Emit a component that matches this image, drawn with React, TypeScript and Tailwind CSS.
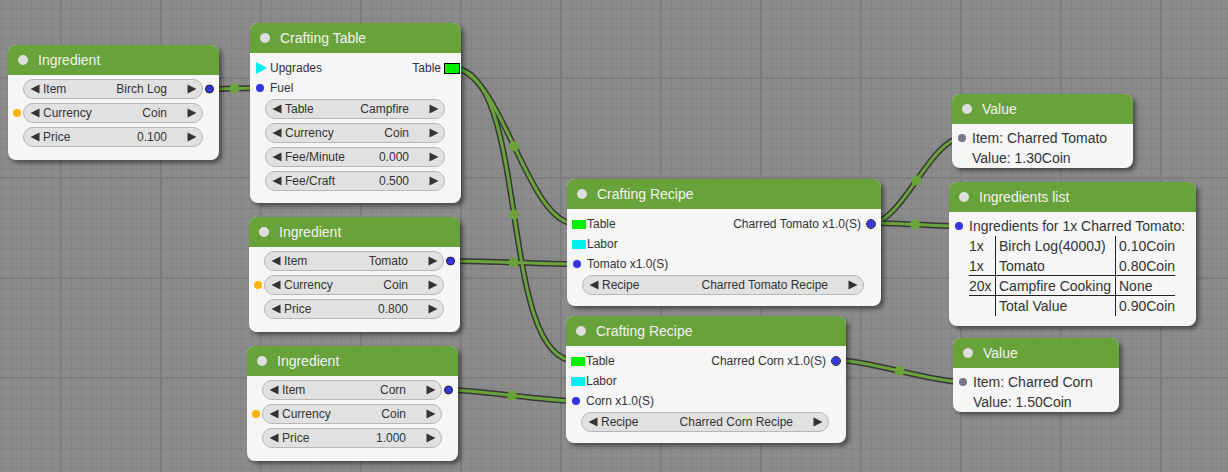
import React from "react";

const FONT = "font-['Liberation_Sans',Arial,sans-serif]";

function TriL() {
  return (
    <svg width="10" height="10" viewBox="0 0 10 10" className="shrink-0">
      <polygon points="0.5,5 9.5,0.5 9.5,9.5" fill="#333" />
    </svg>
  );
}
function TriR() {
  return (
    <svg width="10" height="10" viewBox="0 0 10 10" className="shrink-0">
      <polygon points="0.5,0.5 9.5,5 0.5,9.5" fill="#333" />
    </svg>
  );
}

function Widget({ label, value, inDot, outDot }: { label: string; value: string; inDot?: boolean; outDot?: boolean }) {
  return (
    <div className="relative">
      {inDot && <div className="absolute left-[-10px] top-1/2 -translate-y-1/2 w-[8px] h-[8px] rounded-full bg-[#ffb300]" />}
      {outDot && (
        <div className="absolute right-[-10.5px] top-1/2 -translate-y-1/2 w-[9px] h-[9px] rounded-full bg-[#3434e0] border border-[#222]" />
      )}
      <div className="h-5 rounded-full border border-[#b7b7b7] bg-[#e1e1e1] flex items-center pl-[6px] pr-[5px] text-[12px] text-[#333] leading-none">
        <TriL />
        <span className="ml-[3px] whitespace-nowrap">{label}</span>
        <span className="ml-auto mr-[20px] whitespace-nowrap">{value}</span>
        <TriR />
      </div>
    </div>
  );
}

function Node({
  x,
  y,
  w,
  title,
  children,
}: {
  x: number;
  y: number;
  w: number;
  title: string;
  children: React.ReactNode;
}) {
  return (
    <div
      className="absolute rounded-[8px] bg-[#f6f6f6] shadow-[3px_3px_4px_rgba(0,0,0,0.45)]"
      style={{ left: x, top: y, width: w }}
    >
      <div className="h-[30px] rounded-t-[8px] bg-[#68a23b] flex items-center pl-[10px]">
        <div className="w-[10px] h-[10px] rounded-full bg-[#dedede]" />
        <span className="ml-[10px] text-[14px] text-[#f2f2f2] whitespace-nowrap">{title}</span>
      </div>
      {children}
    </div>
  );
}

function Ingredient({ x, y, item, price }: { x: number; y: number; item: string; price: string }) {
  return (
    <Node x={x} y={y} w={211} title="Ingredient">
      <div className="flex flex-col gap-1 pt-1 pb-[13px] pl-[15px] pr-[16px]">
        <Widget label="Item" value={item} outDot />
        <Widget label="Currency" value="Coin" inDot />
        <Widget label="Price" value={price} />
      </div>
    </Node>
  );
}

function GreenRect({ border }: { border?: boolean }) {
  return <div className={`w-[14px] h-[9px] bg-[#00f000] ${border ? "outline outline-1 outline-black" : ""}`} />;
}
function CyanRect() {
  return <div className="w-[14px] h-[9px] bg-[#00f0f0]" />;
}
function BlueDot({ ring }: { ring?: boolean }) {
  return (
    <div
      className={`w-[8px] h-[8px] rounded-full bg-[#3434e0] ${ring ? "outline outline-1 outline-[#222]" : ""}`}
    />
  );
}

function SlotRow({
  left,
  label,
  rightLabel,
  right,
}: {
  left: React.ReactNode;
  label?: string;
  rightLabel?: string;
  right?: React.ReactNode;
}) {
  return (
    <div className="h-5 flex items-center text-[12px] text-[#333]">
      <div className="w-5 flex items-center justify-center shrink-0">{left}</div>
      <span className="whitespace-nowrap">{label}</span>
      {rightLabel && <span className="ml-auto whitespace-nowrap">{rightLabel}</span>}
      {right && <div className="w-5 flex items-center justify-center shrink-0">{right}</div>}
    </div>
  );
}

function Recipe({
  x,
  y,
  w,
  out,
  input,
  recipe,
}: {
  x: number;
  y: number;
  w: number;
  out: string;
  input: string;
  recipe: string;
}) {
  return (
    <Node x={x} y={y} w={w} title="Crafting Recipe">
      <div className="pt-[5px] pb-[11px]">
        <SlotRow
          left={<div className="w-full pl-[5px]"><GreenRect /></div>}
          label="Table"
          rightLabel={out}
          right={<BlueDot ring />}
        />
        <SlotRow left={<div className="w-full pl-[5px]"><CyanRect /></div>} label="Labor" />
        <SlotRow left={<BlueDot />} label={input} />
        <div className="mt-px pl-[15px] pr-[17px]">
          <Widget label="Recipe" value={recipe} />
        </div>
      </div>
    </Node>
  );
}

function ValueNode({ x, y, w, item, value }: { x: number; y: number; w: number; item: string; value: string }) {
  return (
    <Node x={x} y={y} w={w} title="Value">
      <div className="pt-1 text-[14px] text-[#333]">
        <div className="h-5 flex items-center">
          <div className="w-5 flex justify-center">
            <div className="w-[8px] h-[8px] rounded-full bg-[#77778a]" />
          </div>
          <span className="whitespace-nowrap">{item}</span>
        </div>
        <div className="h-5 flex items-center pl-5 whitespace-nowrap">{value}</div>
      </div>
    </Node>
  );
}

const links: [number, number, number, number][] = [
  [209, 89, 260, 88],
  [452, 68, 576, 224],
  [452, 68, 576, 361],
  [450, 261, 577, 264],
  [448, 390, 576, 401],
  [871, 223, 962, 138],
  [871, 223, 959, 226],
  [836, 360, 963, 382],
];

function linkPath(x1: number, y1: number, x2: number, y2: number) {
  const d = Math.hypot(x2 - x1, y2 - y1) * 0.25;
  return `M${x1} ${y1} C${x1 + d} ${y1} ${x2 - d} ${y2} ${x2} ${y2}`;
}
function mid(x1: number, y1: number, x2: number, y2: number) {
  const d = Math.hypot(x2 - x1, y2 - y1) * 0.25;
  const cx1 = x1 + d,
    cx2 = x2 - d;
  return [(x1 + 3 * cx1 + 3 * cx2 + x2) / 8, (y1 + 3 * y1 + 3 * y2 + y2) / 8];
}

function Canvas() {
  return (
    <svg className="absolute inset-0" width="1228" height="472">
      <defs>
        <pattern id="gmin" width="10" height="10" patternUnits="userSpaceOnUse" x="1" y="8">
          <path d="M0 0.5H10M0.5 0V10" stroke="#838383" strokeWidth="1" />
        </pattern>
        <pattern id="gmaj" width="100" height="100" patternUnits="userSpaceOnUse" x="60" y="77">
          <path d="M0 1H100M1 0V100" stroke="#7d7d7d" strokeWidth="2" />
        </pattern>
      </defs>
      <rect width="1228" height="472" fill="#8b8b8b" />
      <rect width="1228" height="472" fill="url(#gmin)" />
      <rect width="1228" height="472" fill="url(#gmaj)" />
      {links.map((l, i) => (
        <path key={"o" + i} d={linkPath(...l)} stroke="#383838" strokeWidth="6" fill="none" />
      ))}
      {links.map((l, i) => (
        <path key={"g" + i} d={linkPath(...l)} stroke="#6aa33b" strokeWidth="3" fill="none" />
      ))}
      {links.map((l, i) => {
        const [mx, my] = mid(...l);
        return <circle key={"c" + i} cx={mx} cy={my} r="5" fill="#6aa33b" />;
      })}
    </svg>
  );
}

export default function App() {
  return (
    <div className={`relative w-[1228px] h-[472px] overflow-hidden bg-[#8b8b8b] ${FONT}`}>
      <Canvas />

      <Ingredient x={8} y={45} item="Birch Log" price="0.100" />

      <Node x={250} y={23} w={211} title="Crafting Table">
        <div className="pt-[5px] pb-[12px]">
          <SlotRow
            left={
              <div className="w-full pl-[6px]">
                <svg width="11" height="12" viewBox="0 0 11 12">
                  <polygon points="0,0 11,6 0,12" fill="#00f0f0" />
                </svg>
              </div>
            }
            label="Upgrades"
            rightLabel="Table"
            right={
              <div className="w-full flex justify-end pr-[2px]">
                <GreenRect border />
              </div>
            }
          />
          <SlotRow left={<BlueDot />} label="Fuel" />
          <div className="mt-px flex flex-col gap-1 pl-[15px] pr-[16px]">
            <Widget label="Table" value="Campfire" />
            <Widget label="Currency" value="Coin" />
            <Widget label="Fee/Minute" value="0.000" />
            <Widget label="Fee/Craft" value="0.500" />
          </div>
        </div>
      </Node>

      <Ingredient x={249} y={217} item="Tomato" price="0.800" />
      <Ingredient x={247} y={346} item="Corn" price="1.000" />

      <Recipe x={567} y={179} w={314} out="Charred Tomato x1.0(S)" input="Tomato x1.0(S)" recipe="Charred Tomato Recipe" />
      <Recipe x={566} y={316} w={280} out="Charred Corn x1.0(S)" input="Corn x1.0(S)" recipe="Charred Corn Recipe" />

      <ValueNode x={952} y={94} w={181} item="Item: Charred Tomato" value="Value: 1.30Coin" />

      <Node x={949} y={182} w={247} title="Ingredients list">
        <div className="pt-1 pb-[10px] text-[14px] text-[#333]">
          <div className="h-5 flex items-center">
            <div className="w-5 flex justify-center">
              <BlueDot />
            </div>
            <span className="whitespace-nowrap">Ingredients for 1x Charred Tomato:</span>
          </div>
          <div className="ml-5 grid grid-cols-[26px_120px_60px] leading-5 whitespace-nowrap">
            <div className="h-5">1x</div>
            <div className="h-5 border-l border-[#222] pl-[3px]">Birch Log(4000J)</div>
            <div className="h-5 border-l border-[#222] pl-[3px]">0.10Coin</div>
            <div className="h-5 border-b border-[#222]">1x</div>
            <div className="h-5 border-l border-b border-[#222] pl-[3px]">Tomato</div>
            <div className="h-5 border-l border-b border-[#222] pl-[3px]">0.80Coin</div>
            <div className="h-5 border-b border-[#222]">20x</div>
            <div className="h-5 border-l border-b border-[#222] pl-[3px]">Campfire Cooking</div>
            <div className="h-5 border-l border-b border-[#222] pl-[3px]">None</div>
            <div className="h-5"></div>
            <div className="h-5 border-l border-[#222] pl-[3px]">Total Value</div>
            <div className="h-5 border-l border-[#222] pl-[3px]">0.90Coin</div>
          </div>
        </div>
      </Node>

      <ValueNode x={953} y={338} w={166} item="Item: Charred Corn" value="Value: 1.50Coin" />
    </div>
  );
}
